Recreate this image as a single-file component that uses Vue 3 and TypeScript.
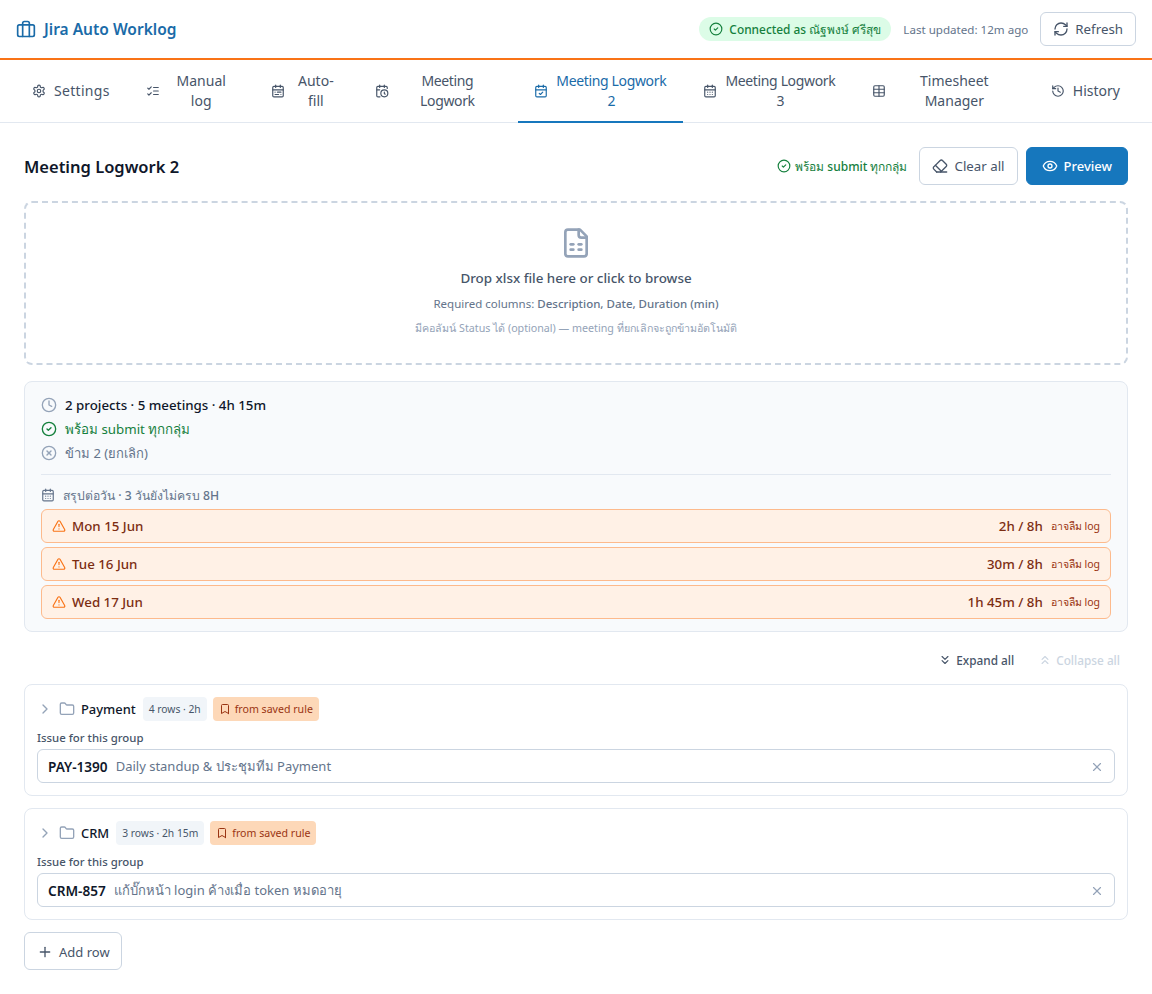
<script setup lang="ts">
type Tab = { label: string, icon: string, active?: boolean, spacing?: 'tight' | 'loose' }
type Group = { name: string, meta: string, key: string, summary: string }

const circle = 'M12 2a10 10 0 1 0 0 20a10 10 0 1 0 0-20'
const calendar = ['M8 2v4', 'M16 2v4', 'M5 4h14a2 2 0 0 1 2 2v14a2 2 0 0 1-2 2H5a2 2 0 0 1-2-2V6a2 2 0 0 1 2-2z', 'M3 10h18']

const icons: Record<string, string[]> = {
  briefcase: ['M4 7h16a2 2 0 0 1 2 2v10a2 2 0 0 1-2 2H4a2 2 0 0 1-2-2V9a2 2 0 0 1 2-2z', 'M16 21V5a2 2 0 0 0-2-2h-4a2 2 0 0 0-2 2v16'],
  settings: [
    'M12.22 2h-.44a2 2 0 0 0-2 2v.18a2 2 0 0 1-1 1.73l-.43.25a2 2 0 0 1-2 0l-.15-.08a2 2 0 0 0-2.73.73l-.22.38a2 2 0 0 0 .73 2.73l.15.1a2 2 0 0 1 1 1.72v.51a2 2 0 0 1-1 1.74l-.15.09a2 2 0 0 0-.73 2.73l.22.38a2 2 0 0 0 2.73.73l.15-.08a2 2 0 0 1 2 0l.43.25a2 2 0 0 1 1 1.73V20a2 2 0 0 0 2 2h.44a2 2 0 0 0 2-2v-.18a2 2 0 0 1 1-1.73l.43-.25a2 2 0 0 1 2 0l.15.08a2 2 0 0 0 2.73-.73l.22-.39a2 2 0 0 0-.73-2.73l-.15-.08a2 2 0 0 1-1-1.74v-.5a2 2 0 0 1 1-1.74l.15-.09a2 2 0 0 0 .73-2.73l-.22-.38a2 2 0 0 0-2.73-.73l-.15.08a2 2 0 0 1-2 0l-.43-.25a2 2 0 0 1-1-1.73V4a2 2 0 0 0-2-2z',
    'M12 9a3 3 0 1 0 0 6a3 3 0 1 0 0-6'
  ],
  list: ['m3 17 2 2 4-4', 'm3 7 2 2 4-4', 'M13 6h8', 'M13 12h8', 'M13 18h8'],
  calRange: [...calendar, 'M17 14h-6', 'M13 18H7', 'M7 14h.01', 'M17 18h.01'],
  calClock: ['M21 7.5V6a2 2 0 0 0-2-2H5a2 2 0 0 0-2 2v14a2 2 0 0 0 2 2h3.5', 'M16 2v4', 'M8 2v4', 'M3 10h5', 'M17.5 17.5 16 16.3V14', 'M16 10a6 6 0 1 0 0 12a6 6 0 1 0 0-12'],
  calCheck: [...calendar, 'm9 16 2 2 4-4'],
  calDays: [...calendar, 'M8 14h.01', 'M12 14h.01', 'M16 14h.01', 'M8 18h.01', 'M12 18h.01', 'M16 18h.01'],
  table: ['M12 3v18', 'M5 3h14a2 2 0 0 1 2 2v14a2 2 0 0 1-2 2H5a2 2 0 0 1-2-2V5a2 2 0 0 1 2-2z', 'M3 9h18', 'M3 15h18'],
  history: ['M3 12a9 9 0 1 0 9-9 9.75 9.75 0 0 0-6.74 2.74L3 8', 'M3 3v5h5', 'M12 7v5l4 2'],
  refresh: ['M3 12a9 9 0 0 1 9-9 9.75 9.75 0 0 1 6.74 2.74L21 8', 'M21 3v5h-5', 'M21 12a9 9 0 0 1-9 9 9.75 9.75 0 0 1-6.74-2.74L3 16', 'M8 16H3v5'],
  check: [circle, 'm9 12 2 2 4-4'],
  eraser: ['m7 21-4.3-4.3c-1-1-1-2.5 0-3.4l9.6-9.6c1-1 2.5-1 3.4 0l5.6 5.6c1 1 1 2.5 0 3.4L13 21', 'M22 21H7', 'm5 11 9 9'],
  eye: ['M2.062 12.348a1 1 0 0 1 0-.696 10.75 10.75 0 0 1 19.876 0 1 1 0 0 1 0 .696 10.75 10.75 0 0 1-19.876 0', 'M12 9a3 3 0 1 0 0 6a3 3 0 1 0 0-6'],
  sheet: ['M15 2H6a2 2 0 0 0-2 2v16a2 2 0 0 0 2 2h12a2 2 0 0 0 2-2V7Z', 'M14 2v4a2 2 0 0 0 2 2h4', 'M8 13h2', 'M14 13h2', 'M8 17h2', 'M14 17h2'],
  clock: [circle, 'M12 6v6l4 2'],
  circleX: [circle, 'm15 9-6 6', 'm9 9 6 6'],
  alert: ['m21.73 18-8-14a2 2 0 0 0-3.48 0l-8 14A2 2 0 0 0 4 21h16a2 2 0 0 0 1.73-3', 'M12 9v4', 'M12 17h.01'],
  down: ['m7 6 5 5 5-5', 'm7 13 5 5 5-5'],
  up: ['m17 11-5-5-5 5', 'm17 18-5-5-5 5'],
  chevron: ['m9 18 6-6-6-6'],
  folder: ['M20 20a2 2 0 0 0 2-2V8a2 2 0 0 0-2-2h-7.9a2 2 0 0 1-1.69-.9L9.6 3.9A2 2 0 0 0 7.93 3H4a2 2 0 0 0-2 2v13a2 2 0 0 0 2 2Z'],
  bookmark: ['m19 21-7-4-7 4V5a2 2 0 0 1 2-2h10a2 2 0 0 1 2 2v16z'],
  x: ['M18 6 6 18', 'm6 6 12 12'],
  plus: ['M5 12h14', 'M12 5v14']
}

const tabs: Tab[] = [
  { label: 'Settings', icon: 'settings', spacing: 'loose' },
  { label: 'Manual log', icon: 'list' },
  { label: 'Auto-fill', icon: 'calRange' },
  { label: 'Meeting Logwork', icon: 'calClock', spacing: 'tight' },
  { label: 'Meeting Logwork 2', icon: 'calCheck', active: true, spacing: 'tight' },
  { label: 'Meeting Logwork 3', icon: 'calDays', spacing: 'tight' },
  { label: 'Timesheet Manager', icon: 'table' },
  { label: 'History', icon: 'history' }
]

const days = [
  { day: 'Mon 15 Jun', total: '2h / 8h' },
  { day: 'Tue 16 Jun', total: '30m / 8h' },
  { day: 'Wed 17 Jun', total: '1h 45m / 8h' }
]

const groups: Group[] = [
  { name: 'Payment', meta: '4 rows · 2h', key: 'PAY-1390', summary: 'Daily standup & ประชุมทีม Payment' },
  { name: 'CRM', meta: '3 rows · 2h 15m', key: 'CRM-857', summary: 'แก้บั๊กหน้า login ค้างเมื่อ token หมดอายุ' }
]
</script>

<template>
  <div class="app">
    <header class="topbar">
      <div class="brand">
        <svg class="ic ic-18" viewBox="0 0 24 24"><path v-for="d in icons.briefcase" :key="d" :d="d" /></svg>
        <span>Jira Auto Worklog</span>
      </div>
      <div class="topbar-right">
        <span class="connected">
          <svg class="ic ic-14" viewBox="0 0 24 24"><path v-for="d in icons.check" :key="d" :d="d" /></svg>
          Connected as ณัฐพงษ์ ศรีสุข
        </span>
        <span class="updated">Last updated: 12m ago</span>
        <button class="btn">
          <svg class="ic ic-16" viewBox="0 0 24 24"><path v-for="d in icons.refresh" :key="d" :d="d" /></svg>
          Refresh
        </button>
      </div>
    </header>

    <nav class="tabs">
      <a v-for="tab in tabs" :key="tab.label" class="tab" :class="[{ active: tab.active }, tab.spacing]">
        <svg class="ic ic-14 tab-ic" viewBox="0 0 24 24"><path v-for="d in icons[tab.icon]" :key="d" :d="d" /></svg>
        <span>{{ tab.label }}</span>
      </a>
    </nav>

    <main class="page">
      <div class="page-head">
        <h1>Meeting Logwork 2</h1>
        <div class="page-actions">
          <span class="ready">
            <svg class="ic ic-14" viewBox="0 0 24 24"><path v-for="d in icons.check" :key="d" :d="d" /></svg>
            พร้อม submit ทุกกลุ่ม
          </span>
          <button class="btn">
            <svg class="ic ic-16" viewBox="0 0 24 24"><path v-for="d in icons.eraser" :key="d" :d="d" /></svg>
            Clear all
          </button>
          <button class="btn primary">
            <svg class="ic ic-16" viewBox="0 0 24 24"><path v-for="d in icons.eye" :key="d" :d="d" /></svg>
            Preview
          </button>
        </div>
      </div>

      <div class="dropzone">
        <svg class="ic drop-ic" viewBox="0 0 24 24"><path v-for="d in icons.sheet" :key="d" :d="d" /></svg>
        <p class="drop-title">Drop xlsx file here or click to browse</p>
        <p class="drop-req">Required columns: <b>Description, Date, Duration (min)</b></p>
        <p class="drop-opt">มีคอลัมน์ Status ได้ (optional) — meeting ที่ยกเลิกจะถูกข้ามอัตโนมัติ</p>
      </div>

      <section class="summary">
        <div class="sum-line strong">
          <svg class="ic ic-16 muted" viewBox="0 0 24 24"><path v-for="d in icons.clock" :key="d" :d="d" /></svg>
          2 projects · 5 meetings · 4h 15m
        </div>
        <div class="sum-line good">
          <svg class="ic ic-16" viewBox="0 0 24 24"><path v-for="d in icons.check" :key="d" :d="d" /></svg>
          พร้อม submit ทุกกลุ่ม
        </div>
        <div class="sum-line skip">
          <svg class="ic ic-16 muted" viewBox="0 0 24 24"><path v-for="d in icons.circleX" :key="d" :d="d" /></svg>
          ข้าม 2 (ยกเลิก)
        </div>
        <div class="days">
          <div class="days-title">
            <svg class="ic ic-14" viewBox="0 0 24 24"><path v-for="d in icons.calDays" :key="d" :d="d" /></svg>
            สรุปต่อวัน · 3 วันยังไม่ครบ 8H
          </div>
          <div v-for="row in days" :key="row.day" class="day-row">
            <svg class="ic ic-14 warn-ic" viewBox="0 0 24 24"><path v-for="d in icons.alert" :key="d" :d="d" /></svg>
            <span class="day-name">{{ row.day }}</span>
            <span class="day-total">{{ row.total }}</span>
            <span class="day-note">อาจลืม log</span>
          </div>
        </div>
      </section>

      <div class="expand-bar">
        <button class="link">
          <svg class="ic ic-14" viewBox="0 0 24 24"><path v-for="d in icons.down" :key="d" :d="d" /></svg>
          Expand all
        </button>
        <button class="link disabled">
          <svg class="ic ic-14" viewBox="0 0 24 24"><path v-for="d in icons.up" :key="d" :d="d" /></svg>
          Collapse all
        </button>
      </div>

      <section v-for="g in groups" :key="g.name" class="group">
        <div class="group-head">
          <svg class="ic ic-16 chev" viewBox="0 0 24 24"><path v-for="d in icons.chevron" :key="d" :d="d" /></svg>
          <svg class="ic ic-16 muted" viewBox="0 0 24 24"><path v-for="d in icons.folder" :key="d" :d="d" /></svg>
          <span class="group-name">{{ g.name }}</span>
          <span class="pill">{{ g.meta }}</span>
          <span class="pill rule">
            <svg class="ic ic-12" viewBox="0 0 24 24"><path v-for="d in icons.bookmark" :key="d" :d="d" /></svg>
            from saved rule
          </span>
        </div>
        <label class="field-label">Issue for this group</label>
        <div class="issue">
          <b>{{ g.key }}</b>
          <span class="issue-text">{{ g.summary }}</span>
          <svg class="ic ic-14 clear" viewBox="0 0 24 24"><path v-for="d in icons.x" :key="d" :d="d" /></svg>
        </div>
      </section>

      <button class="btn add">
        <svg class="ic ic-16" viewBox="0 0 24 24"><path v-for="d in icons.plus" :key="d" :d="d" /></svg>
        Add row
      </button>
    </main>
  </div>
</template>

<style>
body {
  background: #fff;
}
</style>

<style scoped>
.app {
  font-family: "Noto Sans", "Noto Sans CJK SC", sans-serif;
  color: #475569;
  font-size: 14px;
}
.ic {
  fill: none;
  stroke: currentColor;
  stroke-width: 2;
  stroke-linecap: round;
  stroke-linejoin: round;
  flex-shrink: 0;
}
.ic-12 { width: 12px; height: 12px; }
.ic-14 { width: 14px; height: 14px; }
.ic-16 { width: 16px; height: 16px; }
.ic-18 { width: 20px; height: 20px; }
.muted { color: #94a3b8; }

.topbar {
  height: 58px;
  box-sizing: content-box;
  border-bottom: 2px solid #f97316;
  display: flex;
  align-items: center;
  justify-content: space-between;
  padding: 0 16px;
}
.brand {
  display: flex;
  align-items: center;
  gap: 8px;
  font-size: 15.5px;
  font-weight: 600;
  color: #1a6ba8;
}
.topbar-right {
  display: flex;
  align-items: center;
  gap: 12px;
}
.connected {
  display: flex;
  align-items: center;
  gap: 6px;
  height: 24px;
  padding: 0 10px;
  border-radius: 12px;
  background: #dcfce7;
  color: #15803d;
  font-size: 11.9px;
  font-weight: 500;
}
.updated {
  font-size: 11.6px;
  color: #64748b;
}
.btn {
  display: inline-flex;
  align-items: center;
  gap: 6px;
  height: 34px;
  padding: 0 12px;
  background: #fff;
  border: 1px solid #cbd5e1;
  border-radius: 6px;
  color: #475569;
  font: inherit;
  font-size: 13.3px;
}

.tabs {
  display: flex;
  gap: 4px;
  height: 62px;
  box-sizing: content-box;
  padding: 0 16px;
  border-bottom: 1px solid #e2e8f0;
}
.tab {
  display: flex;
  align-items: center;
  justify-content: center;
  gap: 8px;
  padding: 0 16px;
  text-align: center;
  line-height: 20px;
  color: #475569;
  border-bottom: 2px solid transparent;
  margin-bottom: -1px;
}
.tab.tight {
  letter-spacing: -0.35px;
}
.tab.loose {
  letter-spacing: 0.3px;
}
.tab.active {
  color: #1a6ba8;
  border-bottom-color: #1677bd;
}

.page {
  padding: 24px;
}
.page-head {
  display: flex;
  align-items: center;
  justify-content: space-between;
  height: 38px;
  margin-bottom: 16px;
}
h1 {
  margin: 0;
  font-size: 16.5px;
  font-weight: 600;
  color: #0f172a;
}
.page-actions {
  display: flex;
  align-items: center;
  gap: 8px;
}
.page-actions .btn {
  height: 38px;
  padding: 0 12px;
}
.ready {
  display: flex;
  align-items: center;
  gap: 4px;
  margin-right: 4px;
  font-size: 12px;
  font-weight: 500;
  color: #15803d;
}
.page-actions .btn.primary {
  background: #1677bd;
  border-color: #1677bd;
  color: #fff;
  padding: 0 15px 0 15px;
  font-size: 13px;
  font-weight: 500;
}

.dropzone {
  height: 164px;
  box-sizing: border-box;
  border: 2px dashed #cbd5e1;
  border-radius: 8px;
  display: flex;
  flex-direction: column;
  align-items: center;
  padding-top: 24px;
  margin-bottom: 16px;
}
.drop-ic {
  width: 32px;
  height: 32px;
  color: #94a3b8;
  margin-bottom: 9px;
}
.dropzone p {
  margin: 0;
}
.drop-title {
  font-size: 13.4px;
  font-weight: 500;
  color: #475569;
  line-height: 20px;
  margin-bottom: 6px !important;
}
.drop-req {
  font-size: 11.5px;
  line-height: 20px;
  color: #64748b;
  margin-bottom: 4px !important;
}
.drop-req b {
  font-weight: 500;
}
.drop-opt {
  font-size: 10.7px;
  line-height: 20px;
  color: #94a3b8;
}

.summary {
  background: #f8fafc;
  border: 1px solid #e2e8f0;
  border-radius: 8px;
  padding: 11px 16px 12px;
}
.sum-line {
  display: flex;
  align-items: center;
  gap: 8px;
  height: 24px;
  font-size: 13.3px;
}
.sum-line.strong {
  color: #0f172a;
  font-weight: 500;
}
.sum-line.good {
  color: #15803d;
}
.sum-line.skip {
  color: #64748b;
  font-size: 13px;
}
.days {
  margin-top: 9px;
  padding-top: 11px;
  border-top: 1px solid #e2e8f0;
  display: flex;
  flex-direction: column;
  gap: 4px;
}
.days-title {
  display: flex;
  align-items: center;
  gap: 8px;
  height: 18px;
  margin-bottom: 1px;
  font-size: 12.2px;
  font-weight: 500;
  color: #64748b;
}
.day-row {
  display: flex;
  align-items: center;
  height: 34px;
  box-sizing: border-box;
  padding: 0 10px;
  background: #fff1e6;
  border: 1px solid #fdba8c;
  border-radius: 6px;
  color: #7c2d12;
  font-size: 13.3px;
  font-weight: 500;
}
.warn-ic {
  color: #f97316;
  margin-right: 6px;
}
.day-name {
  flex: 1;
}
.day-note {
  margin-left: 8px;
  font-size: 10.5px;
  font-weight: 400;
  color: #9a3412;
}

.expand-bar {
  display: flex;
  justify-content: flex-end;
  align-items: center;
  gap: 8px;
  height: 28px;
  margin: 14px 0 10px;
}
.link {
  display: inline-flex;
  align-items: center;
  gap: 4px;
  padding: 0 8px;
  background: none;
  border: 0;
  font: inherit;
  font-size: 11.8px;
  font-weight: 500;
  color: #475569;
}
.link.disabled {
  color: #cbd5e1;
}

.group {
  border: 1px solid #e2e8f0;
  border-radius: 8px;
  padding: 12px;
  margin-bottom: 12px;
}
.group-head {
  display: flex;
  align-items: center;
  height: 24px;
  gap: 6px;
  margin-bottom: 8px;
}
.chev {
  color: #94a3b8;
}
.group-name {
  font-size: 12.9px;
  font-weight: 500;
  color: #0f172a;
  margin-right: 1px;
}
.pill {
  display: inline-flex;
  align-items: center;
  gap: 4px;
  height: 24px;
  padding: 0 6px;
  border-radius: 4px;
  background: #f1f5f9;
  font-size: 10.3px;
  color: #475569;
}
.pill.rule {
  background: #fdd8b8;
  color: #9a3412;
  font-size: 10.6px;
}
.field-label {
  display: block;
  font-size: 11.4px;
  font-weight: 500;
  line-height: 16px;
  padding-top: 1px;
  margin-bottom: 3px;
  color: #475569;
}
.issue {
  display: flex;
  align-items: center;
  height: 34px;
  box-sizing: border-box;
  padding: 1px 10px 0;
  border: 1px solid #cbd5e1;
  border-radius: 6px;
  background: #fff;
  font-size: 13px;
}
.issue b {
  font-weight: 600;
  font-size: 13.6px;
  color: #0f172a;
  margin-right: 8px;
}
.issue-text {
  flex: 1;
  color: #64748b;
}
.clear {
  color: #94a3b8;
}
.btn.add {
  height: 38px;
  gap: 6px;
  padding: 1px 11px 0 12px;
  font-size: 13px;
}
</style>
